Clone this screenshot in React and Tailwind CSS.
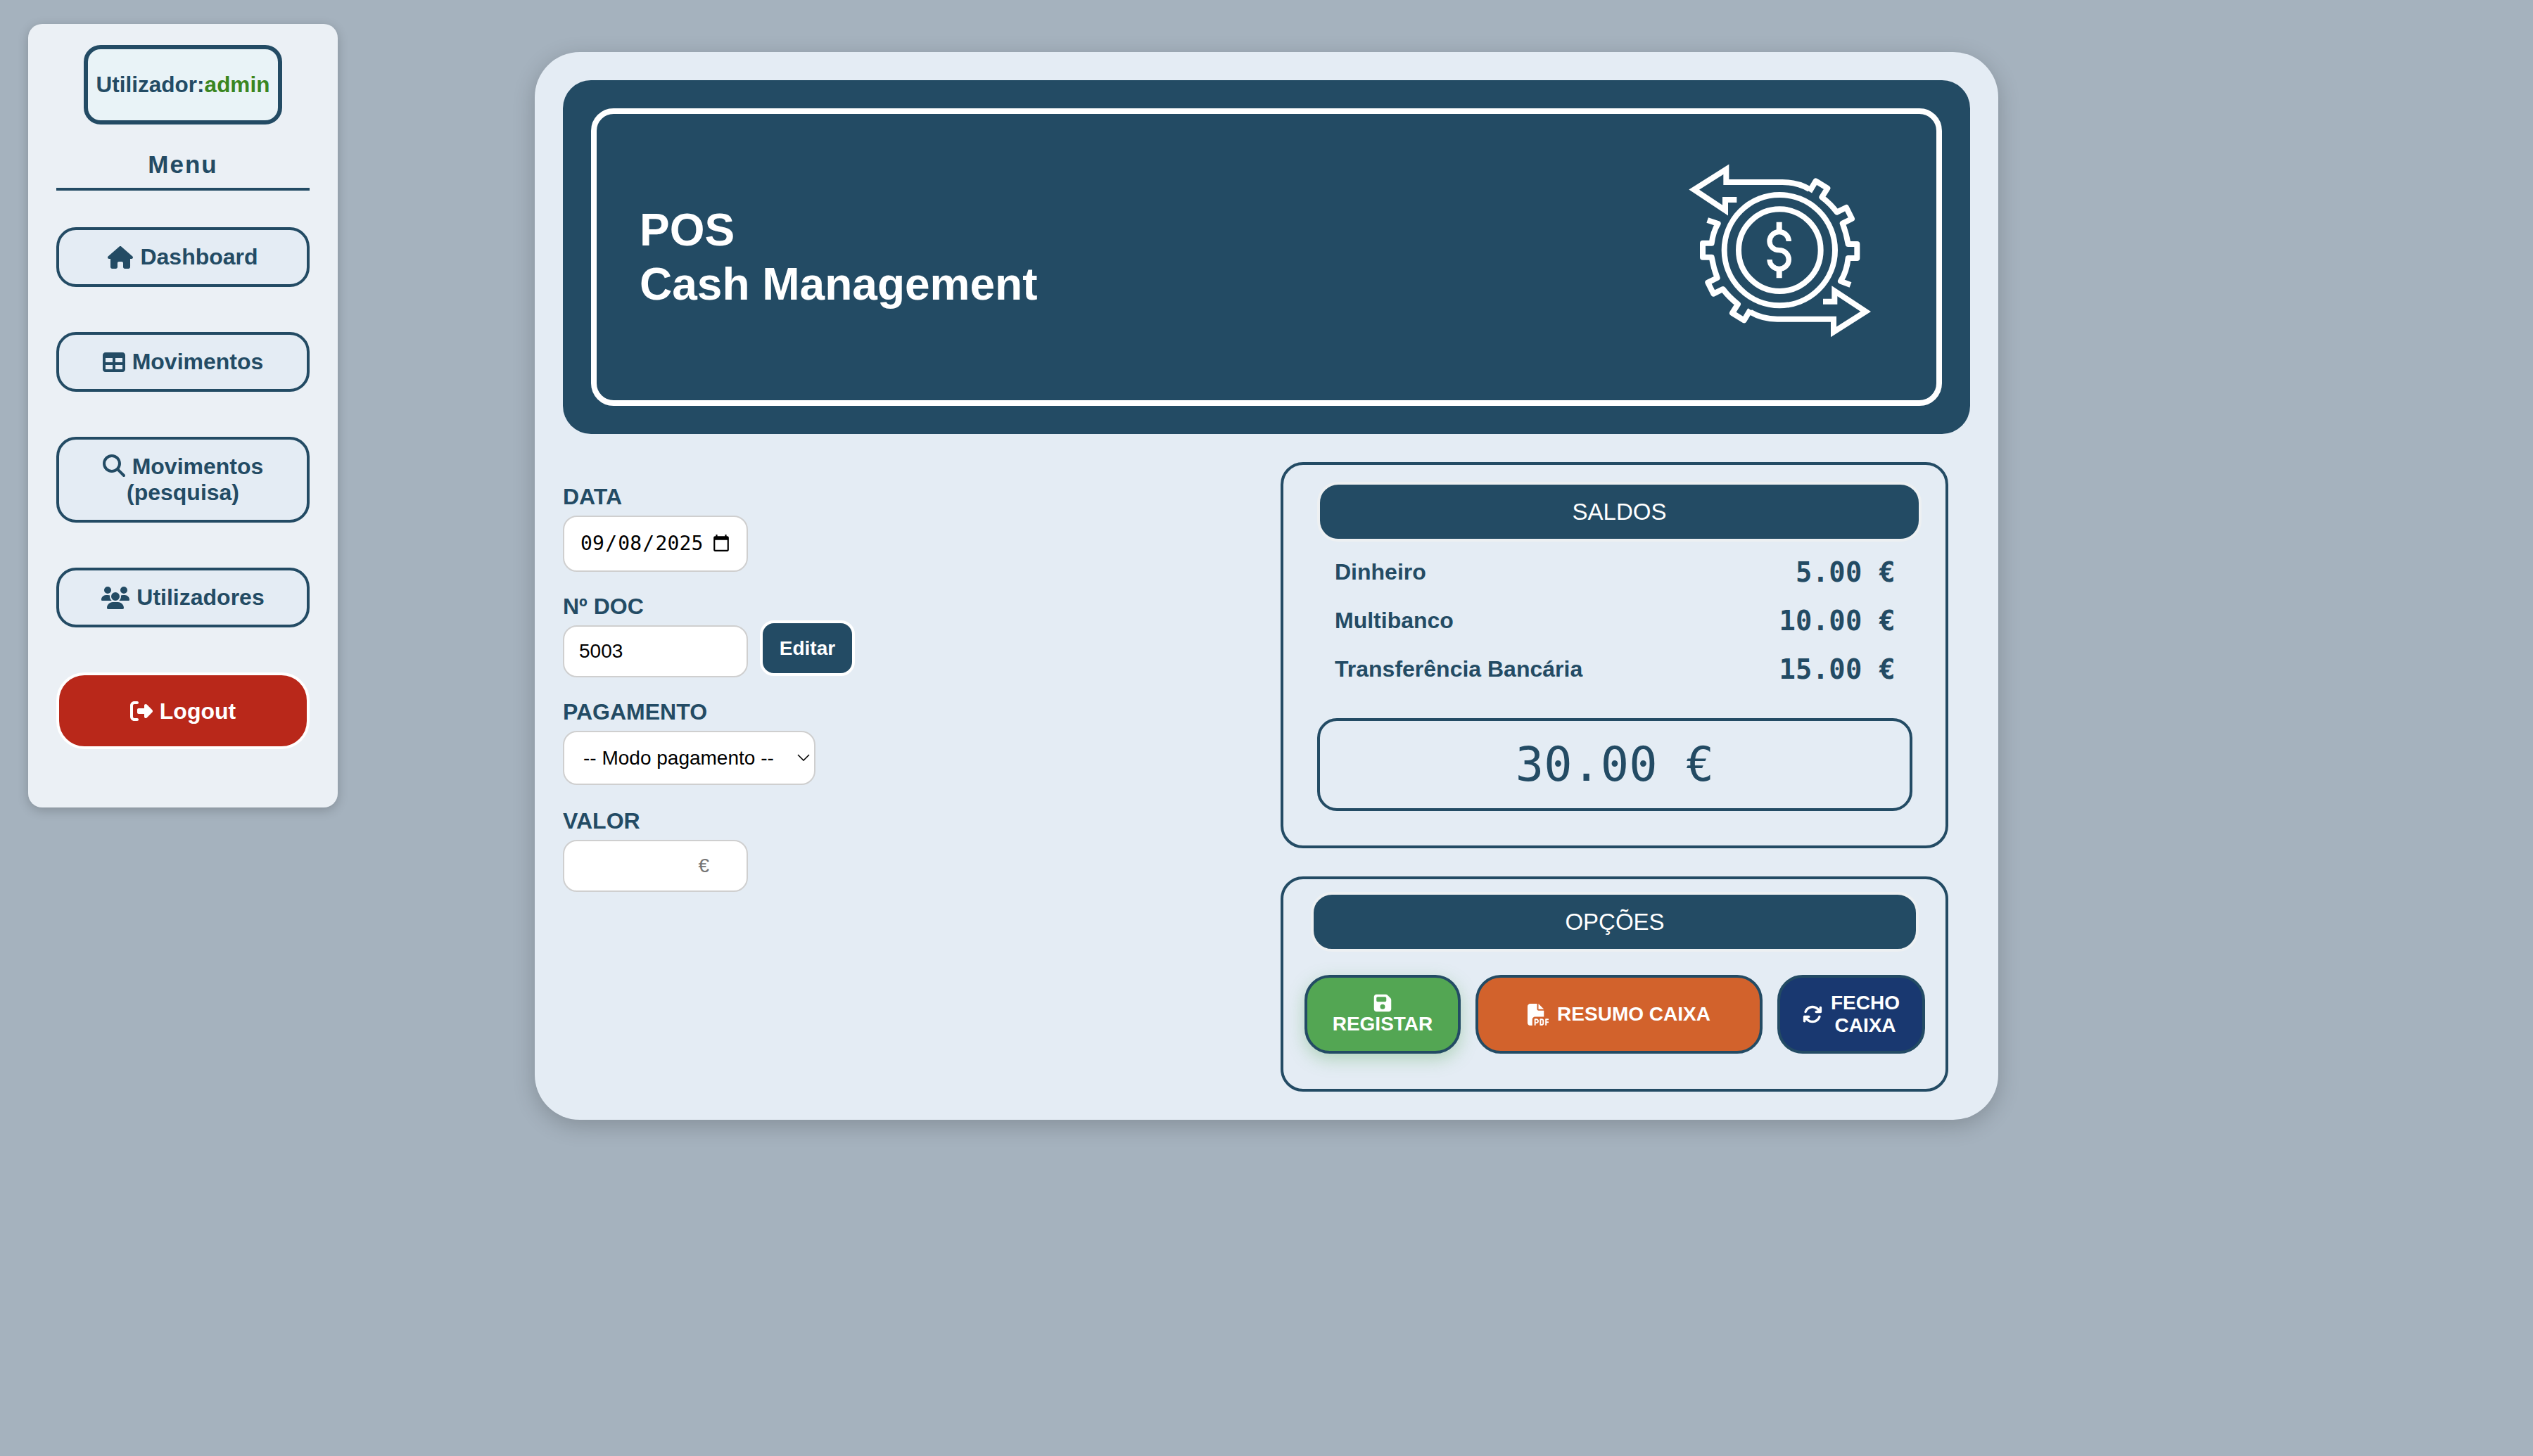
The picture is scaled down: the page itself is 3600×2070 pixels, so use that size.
import React from 'react';
import {
    FaHouse,
    FaTable,
    FaMagnifyingGlass,
    FaUsers,
    FaRightFromBracket,
    FaFloppyDisk,
    FaFilePdf,
    FaArrowsRotate
} from 'react-icons/fa6';

const navBtn = 'flex w-full items-center justify-center rounded-[28px] border-4 border-[#234b64] bg-[#e4ecf4] text-center text-[32px] font-bold leading-[37px] text-[#234b64]';
const label = 'block h-[37px] text-[32px] font-bold leading-[37px] text-[#234b64]';
const field = 'rounded-[20px] border-2 border-[#cfcfcf] bg-white text-[28px] text-black outline-none';
const actionBtn = 'flex h-[112px] items-center justify-center rounded-[36px] border-4 border-[#234b64] text-[28px] font-bold leading-[32px] text-white';
const sectionTitle = 'box-content flex h-[77px] items-center justify-center rounded-[30px] border-4 border-[#edf0f2] bg-[#234b64] text-[33px] text-white';

const CashIcon = () => (
    <svg viewBox="300 160 780 741" width="260" height="247" fill="none" stroke="white" strokeWidth="24" className="mb-[18px] shrink-0">
        <circle cx="688" cy="528" r="236" />
        <circle cx="688" cy="528" r="175" />
        <path d="M686 408V450M686 608V647" />
        <path strokeWidth="22" d="M727 490c0-22-18-40-41-40c-23 0-41 18-41 40c0 22 18 38 41 38c23 0 41 18 41 40c0 22-18 40-41 40c-23 0-41-18-41-40" />
        {/* top arrow and right half of the gear */}
        <path d="M505 313H456V358L323 270L460 183V238H700Q765 238 815 268" />
        <path strokeLinejoin="round" d="M815 278L842 233L892 264L868 302Q905 330 932 366L972 346L996 394L956 414Q972 455 980 502H1018V562H980Q974 620 948 660L990 676" />
        {/* bottom arrow and left half of the gear */}
        <g transform="rotate(180 689 530)">
            <path d="M505 313H456V358L323 270L460 183V238H700Q765 238 815 268" />
            <path strokeLinejoin="round" d="M815 278L842 233L892 264L868 302Q905 330 932 366L972 346L996 394L956 414Q972 455 980 502H1018V562H980Q974 610 953 645L998 660" />
        </g>
    </svg>
);

const Sidebar = () => (
    <aside className="mt-[34px] ml-[40px] flex h-[1114px] w-[440px] shrink-0 flex-col items-center rounded-[20px] bg-[#ebf0f5] px-[40px] pt-[30px] shadow-[0_4px_16px_rgba(0,0,0,0.2)]">
        <div className="flex h-[113px] w-[282px] items-center justify-center rounded-[24px] border-[6px] border-[#234b64] bg-[#e9f3f7] text-[31.5px] font-bold text-[#234b64]">
            Utilizador:<span className="text-[#3a861f]">admin</span>
        </div>
        <div className="mt-[37px] w-full border-b-4 border-[#234b64] pb-[13px] text-center text-[35px] font-bold leading-[40px] tracking-[2px] text-[#234b64]">
            Menu
        </div>
        <nav className="mt-[52px] flex w-full flex-col gap-[64px]">
            <button className={`${navBtn} h-[85px] gap-[10px]`}><FaHouse size={36} />Dashboard</button>
            <button className={`${navBtn} h-[85px] gap-[10px]`}><FaTable size={32} />Movimentos</button>
            <button className={`${navBtn} h-[122px]`}>
                <span><FaMagnifyingGlass size={32} className="mr-[10px] inline align-[-4px]" />Movimentos<br />(pesquisa)</span>
            </button>
            <button className={`${navBtn} h-[85px] gap-[10px]`}><FaUsers size={40} />Utilizadores</button>
            <button className="flex h-[109px] w-full items-center justify-center gap-[10px] rounded-[40px] border-4 border-white bg-[#b9281a] text-[32px] font-bold text-white">
                <FaRightFromBracket size={32} />Logout
            </button>
        </nav>
    </aside>
);

const FormColumn = () => (
    <div className="w-[1020px] shrink-0 pt-[71px]">
        <label className={label}>DATA</label>
        <input
            type="date"
            defaultValue="2025-09-08"
            className={`${field} mt-[8px] block h-[80px] w-[263px] pr-[20px] pl-[22px] font-['DejaVu_Sans_Mono',monospace] text-[28.8px] tracking-[0.2px]`}
        />
        <label className={`${label} mt-[31px]`}>Nº DOC</label>
        <div className="mt-[1px] flex items-start gap-[17px]">
            <input type="text" defaultValue="5003" className={`${field} mt-[7px] h-[74px] w-[263px] pl-[21px]`} />
            <button className="h-[79px] w-[135px] rounded-[20px] border-4 border-white bg-[#234b64] text-[28px] font-bold text-white">Editar</button>
        </div>
        <label className={`${label} mt-[31px]`}>PAGAMENTO</label>
        <div className="relative mt-[8px] w-[359px]">
            <select className={`${field} block h-[77px] w-full appearance-none pl-[27px]`}>
                <option>-- Modo pagamento --</option>
            </select>
            <svg viewBox="0 0 18 10" width="18" height="10" fill="none" stroke="black" strokeWidth="1.6" className="pointer-events-none absolute top-[33px] right-[8px]">
                <path d="M1 1L9 9L17 1" />
            </svg>
        </div>
        <label className={`${label} mt-[33px]`}>VALOR</label>
        <input type="text" placeholder="€" className={`${field} mt-[8px] block h-[74px] w-[263px] pr-[53px] text-right placeholder:text-[#757575]`} />
    </div>
);

const SaldoRow = ({ name, value }) => (
    <div className="flex h-[69px] items-center justify-between pr-[24px] pl-[25px]">
        <span className="text-[32px] font-bold text-[#234b64]">{name}</span>
        <span className="mt-[4px] font-['DejaVu_Sans_Mono',monospace] text-[38.8px] font-bold tracking-[0.3px] whitespace-pre text-[#234b64]">{value}</span>
    </div>
);

const RightColumn = () => (
    <div className="w-[949px] shrink-0">
        <section className="mt-[40px] h-[549px] rounded-[32px] border-4 border-[#234b64] pt-[24px] pl-[48px]">
            <div className={`${sectionTitle} w-[851px]`}>SALDOS</div>
            <div className="mt-[8px] w-[846px]">
                <SaldoRow name="Dinheiro" value="5.00 €" />
                <SaldoRow name="Multibanco" value="10.00 €" />
                <SaldoRow name="Transferência Bancária" value="15.00 €" />
                <div className="mt-[36px] flex h-[132px] items-center justify-center rounded-[28px] border-4 border-[#234b64] font-['DejaVu_Sans_Mono',monospace] text-[67px] text-[#234b64]">
                    30.00 €
                </div>
            </div>
        </section>
        <section className="mt-[40px] h-[306px] rounded-[32px] border-4 border-[#234b64] pt-[18px]">
            <div className={`${sectionTitle} ml-[39px] w-[856px]`}>OPÇÕES</div>
            <div className="mt-[33px] ml-[30px] flex gap-[21px]">
                <button className={`${actionBtn} w-[222px] flex-col bg-[#53a653] shadow-[0_8px_24px_rgba(83,166,83,0.35)]`}>
                    <FaFloppyDisk size={28} />
                    <span>REGISTAR</span>
                </button>
                <button className={`${actionBtn} w-[408px] gap-[11px] bg-[#d2622c]`}>
                    <FaFilePdf size={31} />RESUMO CAIXA
                </button>
                <button className={`${actionBtn} w-[210px] gap-[12px] bg-[#193870]`}>
                    <FaArrowsRotate size={28} />
                    <span>FECHO<br />CAIXA</span>
                </button>
            </div>
        </section>
    </div>
);

export default function App() {
    return (
        <div className="flex min-h-[2070px] items-start bg-[#a5b2be] font-['Liberation_Sans',Arial,sans-serif]">
            <Sidebar />
            <main className="mt-[74px] ml-[280px] h-[1518px] w-[2080px] shrink-0 rounded-[64px] bg-[#e4ecf4] p-[40px] shadow-[0_8px_32px_rgba(0,0,0,0.2)]">
                <header className="h-[503px] rounded-[40px] bg-[#234b64] p-[40px]">
                    <div className="flex h-full items-center justify-between rounded-[32px] border-8 border-white pr-[92px] pl-[61px]">
                        <h1 className="text-[64px] leading-[77px] font-bold text-white">POS<br />Cash Management</h1>
                        <CashIcon />
                    </div>
                </header>
                <div className="flex">
                    <FormColumn />
                    <RightColumn />
                </div>
            </main>
        </div>
    );
}
